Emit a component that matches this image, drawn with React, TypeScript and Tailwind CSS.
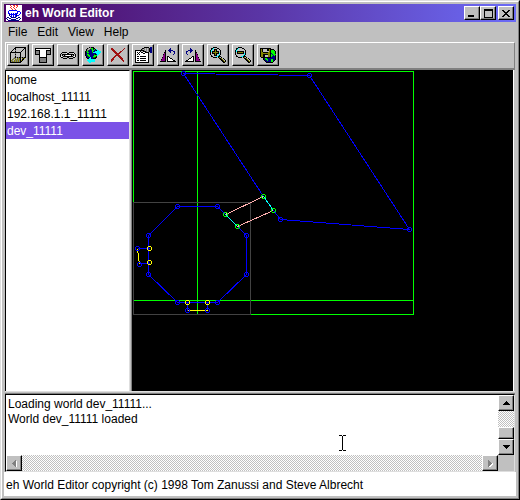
import React, { useState } from 'react';

const PALETTE: Record<string, string> = {
  k: '#000000',
  w: '#ffffff',
  g: '#808080',
  l: '#c0c0c0',
  y: '#848400',
  c: '#00ffff',
  n: '#000084',
  b: '#0000ff',
  e: '#00ff00',
  d: '#008400',
  r: '#a01010',
  o: '#ff3020',
  p: '#840084',
};

interface PixelsProps {
  rows: string[];
}

// Draws a small bitmap icon, one character per pixel
const Pixels: React.FC<PixelsProps> = ({ rows }) => (
  <svg
    className="block shrink-0"
    width={rows[0].length}
    height={rows.length}
    shapeRendering="crispEdges"
    aria-hidden="true"
  >
    {rows.flatMap((row, y) =>
      row.split('').map((ch, x) =>
        PALETTE[ch] ? <rect key={`${x}-${y}`} x={x} y={y} width="1" height="1" fill={PALETTE[ch]} /> : null
      )
    )}
  </svg>
);

const JAVA = [
  'wwwwowwoowoowwww',
  'wwwwwowwowwowwww',
  'wwwwowwowwowwwww',
  'wwwwwowwowwwwwww',
  'wwwwwwowwowwwwww',
  'wwwbbbbbbbbwwwww',
  'wwbwwwwwwwwbbbww',
  'wwbwwwwwwwwbwwbw',
  'wwbbwbwbwbbbwwbw',
  'wwwnbbbbbbnwwbww',
  'wwwnwbwbwbnbbwww',
  'wwwwnbwbwbnwwwww',
  'wnnwwnnnnnwwnnww',
  'nwwnnwwwwwnnwwnw',
  'wnwwwnnnnnwwwnww',
  'wwnnnnnnnnnnnwww',
];

const CUBE = [
  '.....kkkkkkkkkkk',
  '....kk........kk',
  '...k.k.......k.k',
  '..k..g......k..k',
  '.k...k.....k...k',
  'kkkkkkkkkkk....k',
  'k....g....k....k',
  'k....k....k....k',
  'k....g....k....k',
  'k....k....k....k',
  'k...gkgkgkkgkgkk',
  'k..gyg.ygyk.yky.',
  'k.yg.ygygyk.kk..',
  'kyg.ygygygkyk...',
  'kgygygygygkk....',
  'kkkkkkkkkkk.....',
];

const TEE = [
  'kkkkkkkkkkkkkkkk',
  'kwwwwwwwwwwwwwwk',
  'kkkkkwwwwwwkkkkk',
  'kgggkwwwwwwkgggk',
  'kgggkwwwwwwkgggk',
  'kgggkwwwwwwkgggk',
  'kkkkkwwwwwwkkkkk',
  '....kwwwwwwk....',
  '....kwwwwwwk....',
  '....kkkkkkkk....',
  '....kggggggk....',
  '....kggggggk....',
  '....kggggggk....',
  '....kggggggk....',
  '....kkkkkkkk....',
];

const CHAIN = [
  '..kkkkk..kkkkk..',
  '.kllllwkkllllwk.',
  'klkkkkkkkkkkkklk',
  'klk.klwwwwwk.klk',
  'kwlkkkkkkkkkklwk',
  '.kkllllkkllllkk.',
  '...kkkk..kkkk...',
];

const GLOBE = [
  '....kgkkk.......',
  '..kglgeekk......',
  '.kglgndenekc....',
  '.kgdnnneennkcc..',
  'kdennnnenncccccc',
  'kneennndcccccccc',
  'kndnnnnnnnncccc.',
  'kneennnnndkncc..',
  'kndeennnneeec...',
  '.kndennneeek....',
  '.knnncnnddkk....',
  '..kkccnnkkk.....',
  '...ccccccc......',
  '..cccccccc......',
  '...ccccccc......',
  '....cc..........',
];

const CROSS = [
  'rr...........r',
  'rrr.........r.',
  '.rrr.......r..',
  '..rrr....rr...',
  '...rrr..rr....',
  '....rrrrr.....',
  '.....rrr......',
  '....rrrrr.....',
  '...rr..rrr....',
  '..rr....rrr...',
  '.rr......rrr..',
  'rrr.......rr..',
  'rr.........rr.',
  'r...........r.',
];

const PROPERTIES = [
  '.........kkkkk.nn',
  '.......kkglglgknn',
  '......kglglglgknn',
  'kkkkkkkkkglglgknn',
  'kwwwwkllkkkglgknn',
  'kwkwkwkkwwkkkk.nn',
  'kwwkwwwwkkwwwk...',
  'kwkwkwwwwwwwwk...',
  'kwwwwwwwwwwwwk...',
  'kwkkwkkkkkkwwk...',
  'kwwwwwwwwwwwwk...',
  'kwkkwkkkkkkwwk...',
  'kwwwwwwwwwwwwk...',
  'kwkkwkkkkkkwwk...',
  'kwwwwwwwwwwwwk...',
  'kkkkkkkkkkkkkk...',
];

const TURN_LEFT = [
  '..........n.....',
  '.........nn.....',
  '.....k..nnnnn...',
  '.....k...nn..nn.',
  '....kk....n...n.',
  '....pk........n.',
  '...kpk.......n..',
  '...ppk..........',
  '...ppk.kk.......',
  '..kppk.kwk......',
  '..pppk.kwwkk....',
  '.kpppk.kwwwwk...',
  '.ppppk.kwwwwwkk.',
  'kkkkkk.kkkkkkkkk',
];

const TURN_RIGHT = TURN_LEFT.map((row) => row.split('').reverse().join(''));

const ZOOM_IN = [
  '...kkkk.........',
  '.kkc...kk.......',
  '.kc.kkk..k......',
  'kc..kyk...k.....',
  'kckkkykkk.k.....',
  'k.kyyyyyk.k.....',
  'k.kkkykkkck.....',
  'k...kyk..ck.....',
  '.k..kkk.ck......',
  '.kk...cckkk.....',
  '...kkkk.kylk....',
  '.........kkylk..',
  '..........kkylk.',
  '...........kkylk',
  '............kkyk',
  '.............kk.',
];

const ZOOM_OUT = ZOOM_IN.map((row, y) => {
  if (y === 2) return '.kc......k......';
  if (y === 3) return 'kc........k.....';
  if (y === 4) return 'kckkkkkkk.k.....';
  if (y === 6) return 'k.kkkkkkkck.....';
  if (y === 7) return 'k........ck.....';
  if (y === 8) return '.k......ck......';
  return row;
});

const SAVE_WORLD = [
  'kkkkkkkkkkk.....',
  'kykllllkkykkkk..',
  'kykllllkkykeeek.',
  'kykllllllykeeeek',
  'kyykkkkkyykeeeek',
  'kyyyyyyyyykneeek',
  'kyykkkkkyykeneee',
  'kyykklllyykeenek',
  'kyykklllyykennnk',
  '.kkkkkkkkkknnnnk',
  '...kneennnnnnnnk',
  '...kndeennneennk',
  '....knnennneenk.',
  '.....knnnnneek..',
  '......kkkkkkk...',
];

const TOOLS = [
  { label: 'New room', rows: CUBE },
  { label: 'New object', rows: TEE },
  { label: 'Link', rows: CHAIN },
  { label: 'Refresh world', rows: GLOBE },
  { label: 'Delete', rows: CROSS },
  { label: 'Properties', rows: PROPERTIES },
  { label: 'Rotate left', rows: TURN_LEFT },
  { label: 'Rotate right', rows: TURN_RIGHT },
  { label: 'Zoom in', rows: ZOOM_IN },
  { label: 'Zoom out', rows: ZOOM_OUT },
  { label: 'Save world', rows: SAVE_WORLD },
];

const MINIMIZE = ['........', '........', '........', '........', '........', '........', 'kkkkkk..', 'kkkkkk..'];
const MAXIMIZE = [
  'kkkkkkkkk',
  'kkkkkkkkk',
  'k.......k',
  'k.......k',
  'k.......k',
  'k.......k',
  'k.......k',
  'k.......k',
  'kkkkkkkkk',
];
const CLOSE = ['kk....kk', '.kk..kk.', '..kkkk..', '...kk...', '..kkkk..', '.kk..kk.', 'kk....kk'];
const ARROW_UP = ['...k...', '..kkk..', '.kkkkk.', 'kkkkkkk'];
const ARROW_DOWN = ['kkkkkkk', '.kkkkk.', '..kkk..', '...k...'];
const ARROW_LEFT = ['...g.', '..ggw', '.gggw', 'ggggw', '.gggw', '..ggw', '...gw'];
const ARROW_RIGHT = ['g....', 'gg...', 'ggg..', 'ggggw', 'gggww', 'ggww.', 'gww..'];
const IBEAM = ['kkk.kkk', ...Array(14).fill('...k...'), 'kkk.kkk'];

const RAISED =
  'flex items-center justify-center bg-[#c0c0c0] border border-t-white border-l-white border-r-black border-b-black shadow-[inset_-1px_-1px_0_#808080]';
const DITHER = 'bg-[repeating-conic-gradient(#c0c0c0_0_25%,#ffffff_0_50%)] bg-[length:2px_2px]';

type Point = [number, number];

const BLUE_LINES = [
  'M51 3L177 5L277 159L148 149L141 140',
  'M51 3L131 126',
  'M93 144L85 136H45L16 165V204L45 232H85L114 204V165L105 156',
  'M5 178H17',
  'M7 193H17',
  'M55 232V240',
  'M75 232V240',
];

const BLUE_NODES: Point[] = [
  [51, 3], [177, 5], [277, 159], [148, 149],
  [45, 136], [85, 136], [114, 165], [114, 204], [85, 232], [45, 232], [16, 204], [16, 165],
  [5, 178], [7, 194], [55, 240], [75, 240],
];
const YELLOW_NODES: Point[] = [[17, 178], [17, 192], [55, 232], [75, 232]];
const GREEN_NODES: Point[] = [[131, 126], [141, 140], [93, 144], [105, 156]];

const Nodes: React.FC<{ points: Point[]; color: string }> = ({ points, color }) => (
  <g fill={color}>
    {points.map(([x, y]) => (
      <path key={`${x}-${y}`} d={`M${x - 1} ${y - 2}h3v1h-3zM${x - 1} ${y + 2}h3v1h-3zM${x - 2} ${y - 1}h1v3h-1zM${x + 2} ${y - 1}h1v3h-1z`} />
    ))}
  </g>
);

const WorldMap = () => (
  <svg className="block h-full w-full" shapeRendering="crispEdges" role="img" aria-label="World map">
    <g fill="none" transform="translate(0.5 0.5)">
      <path d="M1 1H281V244H1ZM65 1V244M1 230H281" stroke="#00ff00" />
      <path d="M1 132H118V244H1Z" stroke="#424242" />
      {BLUE_LINES.map((d) => (
        <path key={d} d={d} stroke="#0000ff" />
      ))}
      <path d="M93 144L131 126M105 156L141 140" stroke="#ffafaf" />
      <path d="M131 126L141 140M93 144L105 156" stroke="#00ffff" />
      <path d="M5 179L7 194M55 240H75" stroke="#ffff00" />
    </g>
    <Nodes points={BLUE_NODES} color="#0000ff" />
    <Nodes points={YELLOW_NODES} color="#ffff00" />
    <Nodes points={GREEN_NODES} color="#00ff00" />
  </svg>
);

const WORLDS = ['home', 'localhost_11111', '192.168.1.1_11111', 'dev_11111'];

const App: React.FC = () => {
  const [selected, setSelected] = useState('dev_11111');

  return (
    <div className="h-screen border border-t-[#dedede] border-l-[#dedede] border-r-black border-b-black bg-[#c0c0c0] font-['Liberation_Sans',Arial,sans-serif] text-xs text-black">
      <div className="flex h-full flex-col border border-t-white border-l-white border-r-[#808080] border-b-[#808080] p-0.5">
        <header className="flex h-[18px] shrink-0 items-center bg-linear-to-r from-[#4a0063] via-[#5a35a5] to-[#6b6bf7] px-0.5">
          <Pixels rows={JAVA} />
          <h1 className="ml-[3px] flex-1 font-bold text-white">eh World Editor</h1>
          <button aria-label="Minimize" className={`${RAISED} h-3.5 w-4`}>
            <Pixels rows={MINIMIZE} />
          </button>
          <button aria-label="Maximize" className={`${RAISED} h-3.5 w-4`}>
            <Pixels rows={MAXIMIZE} />
          </button>
          <button aria-label="Close" className={`${RAISED} ml-0.5 h-3.5 w-4`}>
            <Pixels rows={CLOSE} />
          </button>
        </header>

        <nav className="flex h-5 shrink-0 items-center gap-2.5 pl-1">
          {['File', 'Edit', 'View', 'Help'].map((item) => (
            <button key={item}>{item}</button>
          ))}
        </nav>

        <div className="mx-px flex shrink-0 gap-[3px] border-t border-b-2 border-l border-r border-t-white border-l-white border-r-[#808080] border-b-[#808080] pt-px pb-0.5 pl-px">
          {TOOLS.map(({ label, rows }) => (
            <button key={label} aria-label={label} title={label} className={`${RAISED} h-[22px] w-[22px]`}>
              <Pixels rows={rows} />
            </button>
          ))}
        </div>

        <main className="mx-px flex min-h-0 flex-1 border-b border-[#dedede]">
          <ul className="w-[125px] shrink-0 border-t border-r border-l border-t-black border-r-[#dedede] border-l-black bg-white">
            {WORLDS.map((world) => (
              <li key={world}>
                <button
                  onClick={() => setSelected(world)}
                  className={
                    world === selected
                      ? 'block w-full bg-[#7b52e7] pt-0.5 pl-px text-left leading-[15px] text-white'
                      : 'block w-full pt-0.5 pl-px text-left leading-[15px]'
                  }
                >
                  {world}
                </button>
              </li>
            ))}
          </ul>
          <div className="mx-px min-w-0 flex-1 border-r border-l border-r-white border-l-[#808080] bg-black">
            <WorldMap />
          </div>
        </main>

        <section className="relative mx-px mt-px shrink-0 border-t border-[#808080]">
          <div className="border border-t-black border-r-[#dedede] border-b-[#dedede] border-l-black">
            <div className="flex">
              <textarea
                readOnly
                aria-label="Log"
                className="block h-15 min-w-0 flex-1 resize-none overflow-hidden bg-white pt-0.5 pl-0.5 leading-[15px] outline-none"
                defaultValue={'Loading world dev_11111...\nWorld dev_11111 loaded'}
              />
              <div className={`${DITHER} flex w-4 flex-col`}>
                <button aria-label="Scroll up" className={`${RAISED} h-4 w-4`}>
                  <Pixels rows={ARROW_UP} />
                </button>
                <div className={`${RAISED} mt-auto h-3`} />
                <button aria-label="Scroll down" className={`${RAISED} h-4 w-4`}>
                  <Pixels rows={ARROW_DOWN} />
                </button>
              </div>
            </div>
            <div className="flex">
              <div className={`${DITHER} flex flex-1 justify-between`}>
                <button aria-label="Scroll left" className={`${RAISED} h-4 w-4`}>
                  <Pixels rows={ARROW_LEFT} />
                </button>
                <button aria-label="Scroll right" className={`${RAISED} h-4 w-4`}>
                  <Pixels rows={ARROW_RIGHT} />
                </button>
              </div>
              <div className="h-4 w-4" />
            </div>
          </div>
          <div className="pointer-events-none absolute top-[41px] left-[334px]">
            <Pixels rows={IBEAM} />
          </div>
        </section>

        <footer className="flex h-6 shrink-0 items-center bg-white pt-0.5 pl-0.5">
          eh World Editor copyright (c) 1998 Tom Zanussi and Steve Albrecht
        </footer>
      </div>
    </div>
  );
};

export default App;
